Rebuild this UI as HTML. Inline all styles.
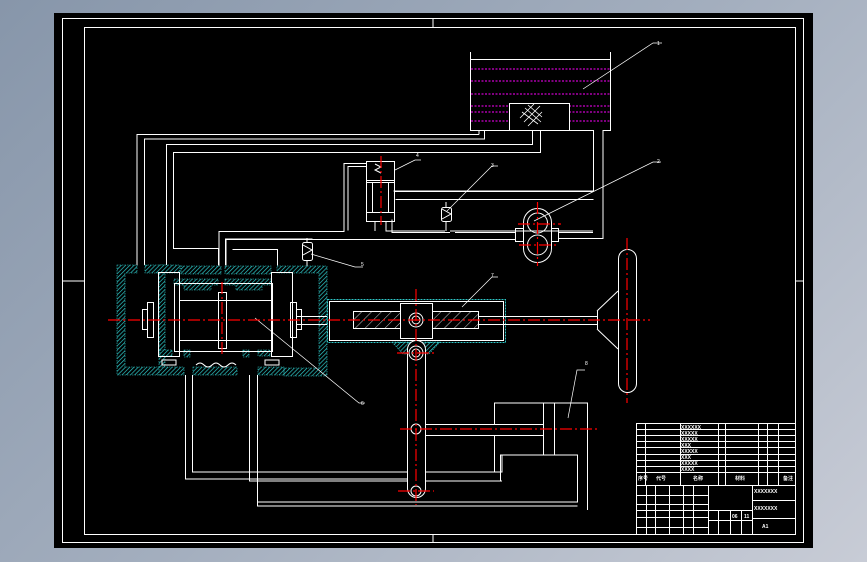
<!DOCTYPE html>
<html><head><meta charset="utf-8"><style>
html,body{margin:0;padding:0;width:867px;height:562px;overflow:hidden;background:linear-gradient(135deg,#8796aa 0%,#a3aebe 50%,#c8ccd6 100%);}
svg{position:absolute;left:0;top:0}
text{font-family:"Liberation Sans","Noto Sans CJK SC",sans-serif;fill:#fff;font-size:5px}
</style></head><body>
<svg width="867" height="562" viewBox="0 0 867 562" xmlns="http://www.w3.org/2000/svg">
<defs>
<pattern id="h" width="3" height="3" patternUnits="userSpaceOnUse" patternTransform="rotate(45)">
<rect width="3" height="3" fill="#000"/><line x1="0" y1="0" x2="0" y2="3" stroke="#2ec8c8" stroke-width="1.4"/></pattern>
<pattern id="w" width="7" height="7" patternUnits="userSpaceOnUse" patternTransform="rotate(45)">
<line x1="0" y1="0" x2="0" y2="7" stroke="#fff" stroke-width="0.8"/></pattern>
</defs>
<rect x="54" y="13" width="759" height="535" fill="#000"/>
<rect x="62.5" y="18.5" width="741" height="524" fill="none" stroke="#fff" stroke-width="1"/>
<rect x="84.5" y="27.5" width="711" height="507" fill="none" stroke="#fff" stroke-width="1"/>
<g stroke="#fff" stroke-width="1" fill="none">
<line x1="433" y1="18" x2="433" y2="27"/><line x1="433" y1="535" x2="433" y2="543"/>
<line x1="62" y1="281" x2="84" y2="281"/><line x1="796" y1="281" x2="804" y2="281"/>
</g>
<g stroke="#f0f" stroke-width="1" stroke-dasharray="2,1.5">
<line x1="471" y1="69" x2="610" y2="69"/><line x1="471" y1="81" x2="610" y2="81"/><line x1="471" y1="94" x2="610" y2="94"/>
<line x1="471" y1="106" x2="509" y2="106"/><line x1="569" y1="106" x2="610" y2="106"/>
<line x1="471" y1="112" x2="509" y2="112"/><line x1="569" y1="112" x2="610" y2="112"/>
<line x1="471" y1="121" x2="509" y2="121"/><line x1="569" y1="121" x2="610" y2="121"/>
</g>
<g stroke="#fff" stroke-width="1" fill="none">
<line x1="470.5" y1="52" x2="470.5" y2="130"/><line x1="610.5" y1="52" x2="610.5" y2="130"/>
<line x1="470" y1="59.5" x2="611" y2="59.5"/>
<rect x="509.5" y="103.5" width="60" height="27"/>
<path d="M522 112l16 12M525 108l16 14M528 105l14 12M520 118l14-14M524 122l16-16M528 126l14-14" stroke-width="0.8"/>
<path d="M470 130.5h9v4M611 130.5h-8v108h-45M593.5 130v61h-200M593.5 199.5h-198M479 134.5h-342v131"/>
<path d="M144.5 265v-126h340v-8.5h24.5"/>
<path d="M569 130.5h24"/>
<path d="M532.5 130v14.5h-366v121M540.5 130v22.5h-367v96h45v17"/>
<path d="M478 130.5h31"/>
<rect x="523.5" y="208.5" width="28" height="54" rx="14"/>
<circle cx="537.5" cy="223" r="10"/><circle cx="537.5" cy="245" r="10"/>
<rect x="515.5" y="228.5" width="8" height="13"/><rect x="551.5" y="228.5" width="7" height="13"/>
<path d="M515 232.5h-60M450 232.5h-58v-13M515 239.5h-289v26"/>
<path d="M558 232.5h35"/>
<rect x="366.5" y="161.5" width="28" height="60"/>
<line x1="366" y1="180.5" x2="394" y2="180.5"/><line x1="366" y1="182.5" x2="394" y2="182.5"/>
<line x1="372.5" y1="182" x2="372.5" y2="212"/><line x1="388.5" y1="182" x2="388.5" y2="212"/>
<line x1="366" y1="212.5" x2="394" y2="212.5"/>
<path d="M375 164l6 3-6 3 6 3" />
<path d="M366 163.5h-22v68h-125v34M366 166.5h-18v64M375 221v10M386 221v10h59M450 231h143"/>
<path d="M394 191.5h199"/>
<rect x="441.5" y="207.5" width="10" height="14" rx="2"/>
<path d="M442 209l9 5-9 5M446 202v5M446 222v9"/>
<rect x="302.5" y="242.5" width="10" height="18" rx="2"/>
<path d="M303 245l9 5-9 5M307 238v4M307 261v5"/>
<path d="M225.5 265v-26h87M232.5 249.5h45v16"/>
</g>
<g stroke="#2ec8c8" stroke-width="0.6" stroke-dasharray="1.5,1">
<path fill="url(#h)" d="M117 265h20v8h-12v94h34v-102h6v110h-48z"/>
<path fill="url(#h)" d="M145 265h35v8h-35zM181 266h40v8h-40zM225 266h46v8h-46zM277 266h50v110h-43v-8h35v-95h-42zM159 367h25v8h-25zM193 367h44v8h-44zM258 367h26v8h-26z"/>
<path fill="url(#h)" d="M174 279h44v6h-7v5h-27v-5h-10zM225 279h46v6h-9v5h-26v-5h-11z"/>
<path fill="url(#h)" d="M392 342h48l-11 12h-26z"/>
<path fill="url(#h)" d="M160 350h12v6h-12zM184 350h6v7h-6zM243 350h6v7h-6zM258 350h12v6h-12z"/>
</g>
<rect x="327.5" y="299.5" width="178" height="43" fill="none" stroke="#2ec8c8" stroke-width="1" stroke-dasharray="2,1"/>
<rect x="329.5" y="301.5" width="174" height="39" fill="none" stroke="#fff" stroke-width="1"/>
<g stroke="#fff" stroke-width="1" fill="none">
<rect x="174.5" y="283.5" width="98" height="68"/>
<rect x="158.5" y="272.5" width="21" height="84"/><rect x="271.5" y="272.5" width="21" height="84"/>
<rect x="218.5" y="292.5" width="8" height="56"/>
<line x1="179" y1="300.5" x2="272" y2="300.5"/><line x1="179" y1="340.5" x2="272" y2="340.5"/>
<rect x="147.5" y="302.5" width="6" height="35"/><rect x="142.5" y="309.5" width="5" height="20"/>
<rect x="290.5" y="302.5" width="6" height="35"/><rect x="296.5" y="309.5" width="5" height="20"/>
<path d="M296 316.5h31M296 324.5h31M162 360h14v5h-14zM265 360h14v5h-14z" />
<path d="M196 365q4-4 8 0t8 0 8 0 8 0 8 0" />
<path d="M185.5 375v104h223M192.5 375v97h216M249.5 375v106h246M257.5 375v131h320M425 472h77v-17M425 481h77" />
<rect x="353.5" y="311.5" width="125" height="17" fill="url(#w)"/>
<rect x="400.5" y="303.5" width="32" height="35" fill="#000"/>
<circle cx="416" cy="320" r="7"/><circle cx="416" cy="320" r="4"/>
<line x1="478" y1="316.5" x2="597" y2="316.5"/><line x1="478" y1="324.5" x2="597" y2="324.5"/>
<rect x="407.5" y="340.5" width="18" height="157" rx="9" fill="#000"/>
<circle cx="416" cy="353" r="7"/><circle cx="416" cy="353" r="4"/>
<circle cx="416" cy="429" r="5"/><circle cx="416" cy="491" r="5"/>
<path d="M597.5 311v18M597 311l21-20M597 329l21 20"/>
<rect x="618.5" y="249.5" width="18" height="143" rx="9"/>
<path d="M494.5 424v-21h93v107"/>
<line x1="543.5" y1="403" x2="543.5" y2="455"/><line x1="554.5" y1="403" x2="554.5" y2="455"/>
<path d="M425 424.5h118M425 435.5h118M494.5 435v37M500.5 481v-26h77v47h-320"/>
<path stroke-width="0.7" d="M583 89l70-46h9M534 221l119-59h8M447 211l45-45h6M311 254l44 13h8M395 170l20-10h6M255 318l104 85h6M462 307l30-30h6M568 418l9-48h8"/>
</g>
<g fill="#fff" font-size="6">
<text x="657" y="45">1</text><text x="657" y="163">2</text><text x="491" y="167">3</text><text x="416" y="157">4</text><text x="361" y="266">5</text><text x="361" y="405">6</text><text x="491" y="277">7</text><text x="585" y="365">8</text>
</g>
<g stroke="#f00" stroke-width="1.2" stroke-dasharray="12,3,2,3" fill="none">
<line x1="108" y1="320" x2="650" y2="320"/>
<line x1="627" y1="238" x2="627" y2="403"/>
<line x1="537.5" y1="202" x2="537.5" y2="266"/>
<line x1="518" y1="224" x2="561" y2="224"/><line x1="519" y1="245" x2="556" y2="245"/>
<line x1="416" y1="289" x2="416" y2="505"/>
<line x1="400" y1="429" x2="598" y2="429"/>
<line x1="381" y1="156" x2="381" y2="225"/>
<line x1="222" y1="282" x2="222" y2="355"/>
<line x1="397" y1="353" x2="434" y2="353"/><line x1="398" y1="491" x2="434" y2="491"/>
</g>
<g stroke="#fff" stroke-width="1" fill="none">
<rect x="636.5" y="423.5" width="159" height="111"/>
<path d="M636 429.5h160M636 435.5h160M636 441.5h160M636 447.5h160M636 454.5h160M636 460.5h160M636 466.5h160M636 472.5h160M636 485.5h160"/>
<path d="M645.5 423v62M680.5 423v62M718.5 423v62M725.5 423v62M758.5 423v62M767.5 423v62M778.5 423v62"/>
<path d="M636 495.5h72M636 504.5h72M636 510.5h72M636 517.5h72M636 527.5h72M708 510.5h44M708 520.5h44M752 500.5h44M752 518.5h44"/>
<path d="M646.5 485v49M655.5 485v49M669.5 485v49M683.5 485v49M693.5 485v49M708.5 485v49M752.5 485v49M718.5 510v24M730.5 510v24M741.5 510v24"/>
</g>
<g font-size="5" font-weight="bold">
<text x="681" y="429">XXXXXX</text><text x="681" y="435">XXXXX</text><text x="681" y="441">XXXXX</text><text x="681" y="447">XXX</text><text x="681" y="453">XXXXX</text><text x="681" y="459">XXX</text><text x="681" y="465">XXXXX</text><text x="681" y="471">XXXX</text>
<text x="638" y="480">序号</text><text x="656" y="480">代号</text><text x="693" y="480">名称</text><text x="735" y="480">材料</text><text x="783" y="480">备注</text>
<text x="754" y="493">XXXXXXX</text><text x="754" y="510">XXXXXXX</text>
<text x="762" y="528" font-size="7">A1</text>
<text x="732" y="518">06</text><text x="744" y="518">11</text>
</g>
</svg>
</body></html>
